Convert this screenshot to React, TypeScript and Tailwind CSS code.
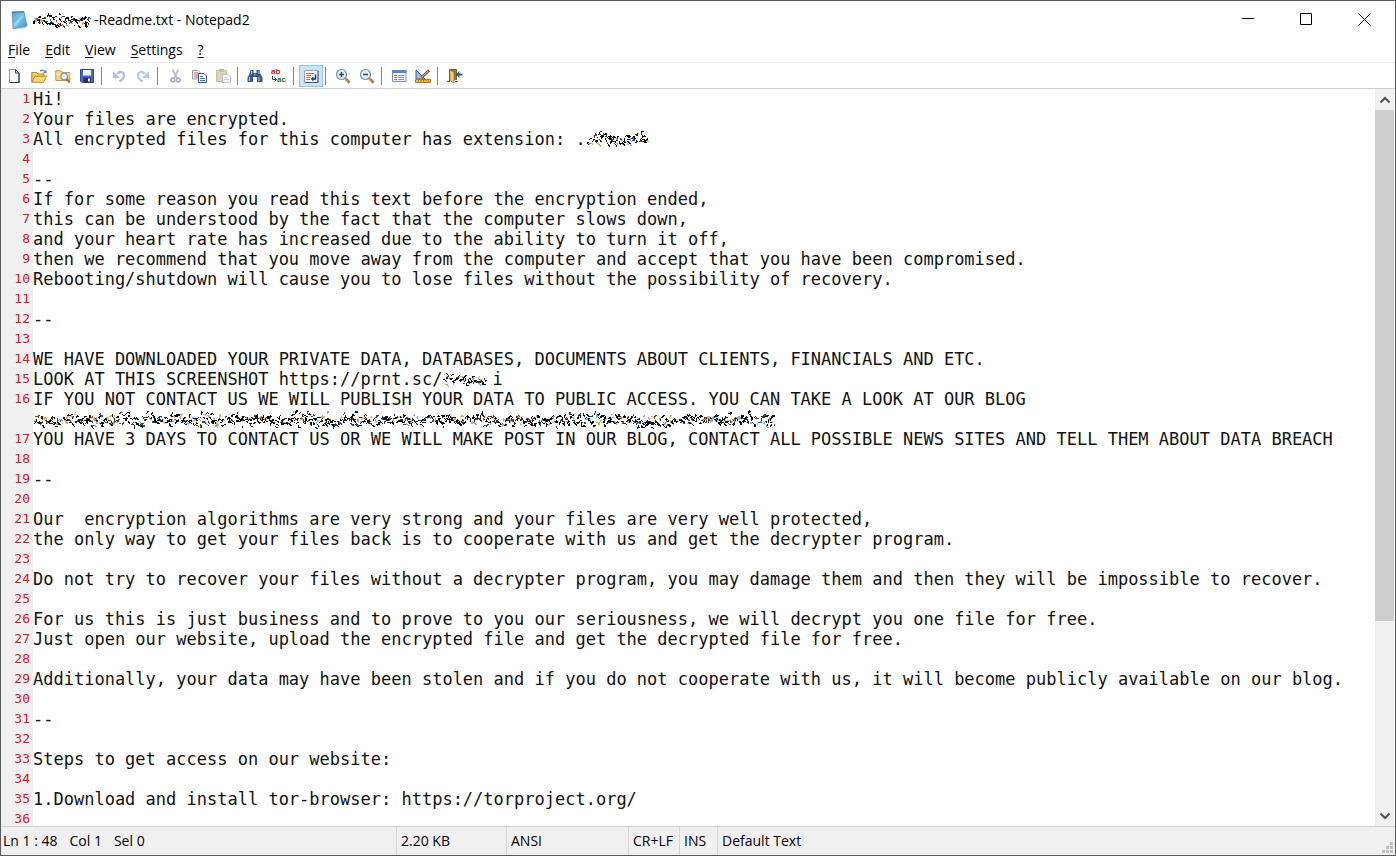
import { Fragment, type ReactNode } from "react";

const UI_FONT = "font-['Open_Sans','Noto_Sans',sans-serif]";
const MONO_FONT = "font-['DejaVu_Sans_Mono','Liberation_Mono',monospace]";

function makeRandom(seed: number) {
  let s = seed;
  return () => {
    s = (s * 1664525 + 1013904223) % 4294967296;
    return s / 4294967296;
  };
}

/* Scrambled pixels that cover a redacted piece of text. */
function Redaction({ width, seed, className }: { width: number; seed: number; className?: string }) {
  const rand = makeRandom(seed);
  const inks = ["#08090c", "#0d111c", "#1d140e", "#111318", "#234a74", "#7a3c12", "#d8a860", "#7fb0dc"];
  const strokes: { d: string; ink: string; w: number }[] = [];
  let ceiling = 6;
  let floor = 17;
  for (let x = 1; x < width - 5; x += 0.7) {
    if (rand() < 0.16) {
      ceiling = rand() < 0.35 ? 2 : 6;
      floor = rand() < 0.25 ? 19 : 16;
    }
    if (rand() < 0.12) continue;
    const y = ceiling + 2 + rand() * (floor - ceiling - 3);
    const dx = rand() * 2.5;
    const dy = rand() < 0.65 ? -rand() * 3 : rand() * 3;
    strokes.push({
      d: `M${x.toFixed(1)} ${y.toFixed(1)}l${dx.toFixed(1)} ${dy.toFixed(1)}l${(rand() * 2).toFixed(1)} ${(rand() * 1.5).toFixed(1)}`,
      ink: inks[Math.floor(Math.pow(rand(), 1.5) * inks.length)],
      w: rand() < 0.25 ? 1.6 : 1,
    });
  }
  return (
    <svg
      role="img"
      aria-label="Redacted"
      className={`inline-block h-5 shrink-0 align-top ${className ?? ""}`}
      width={width}
      height={20}
      viewBox={`0 0 ${width} 20`}
      fill="none"
      shapeRendering="crispEdges"
    >
      {strokes.map((s, i) => (
        <path key={i} d={s.d} stroke={s.ink} strokeWidth={s.w} />
      ))}
    </svg>
  );
}

function Icon({ children }: { children: ReactNode }) {
  return (
    <svg className="size-4" viewBox="0 0 16 16" fill="none" aria-hidden="true">
      {children}
    </svg>
  );
}

const icons: Record<string, ReactNode> = {
  New: (
    <>
      <path d="M2.500 1.500h6l3.500 3.500v9.500h-9.500z" fill="#fdfeff" stroke="#8b94a8" />
      <path d="M12 5v9.500H3" stroke="#25365a" strokeWidth="1.200" />
      <path d="M8.500 1.500V5H12z" fill="#dde5f2" stroke="#35456b" />
    </>
  ),
  Open: (
    <>
      <path d="M.8 14V4.500h4.700L7 6h6v2.500" fill="#f2cf63" stroke="#b3852a" />
      <path d="M.8 14.300 4 8.200h11.500l-3 6.100z" fill="#fbd873" stroke="#bd8b26" />
      <path d="M9 3.200c2-1.600 4-1.200 5.300.6" stroke="#5c7ea8" strokeWidth="1.200" />
      <path d="M15.500 1.500v3.800h-3.600z" fill="#5c7ea8" />
    </>
  ),
  Browse: (
    <>
      <path d="M.8 12.500V2.800h5L7.300 4.500h7.500v8z" fill="#f7d674" stroke="#c19a40" />
      <path d="M1.500 6.200h13" stroke="#fff0b8" />
      <circle cx="9.200" cy="8.500" r="3.300" fill="#dcebf8" stroke="#8796a8" strokeWidth="1.200" />
      <path d="m11.700 11 3 3.500" stroke="#a9691e" strokeWidth="2.200" />
    </>
  ),
  Save: (
    <>
      <path d="M1.500 1.500h13v13H3l-1.500-1.500z" fill="#4f62d4" stroke="#3442a0" />
      <path d="M4 2h8v5.500H4z" fill="#eef3fc" />
      <path d="M4.500 9.500h7.500v5H4.500z" fill="#232b59" />
      <path d="M9 10.500h2v3H9z" fill="#f1f4fb" />
    </>
  ),
  Undo: (
    <>
      <path d="M6 6C8.500 3 13 3.500 13 7.500c0 3-2 4.500-4.500 6" stroke="#b5bfdd" strokeWidth="2.400" />
      <path d="M2 3v7h7z" fill="#b5bfdd" />
    </>
  ),
  Redo: (
    <>
      <path d="M10 6C7.500 3 3 3.500 3 7.500c0 3 2 4.500 4.500 6" stroke="#b9c9df" strokeWidth="2.400" />
      <path d="M14 3v7H7z" fill="#b9c9df" />
    </>
  ),
  Cut: (
    <>
      <path d="M5.500 1.500 10 10M11.500 1.500 7 10" stroke="#bcbfc9" strokeWidth="1.800" />
      <circle cx="5.800" cy="12" r="1.900" stroke="#b0a8cb" strokeWidth="1.600" />
      <circle cx="11.200" cy="12" r="1.900" stroke="#b0a8cb" strokeWidth="1.600" />
    </>
  ),
  Copy: (
    <>
      <path d="M1.500 2.500h5.500l2 2v6.500H1.500z" fill="#fff" stroke="#8d96b5" />
      <path d="M3 5h4M3 7h4M3 9h4" stroke="#c0564c" />
      <path d="M7.500 5.500h5.500l2.500 2.500v6.500h-8z" fill="#f3f7ff" stroke="#31569a" />
      <path d="M9 8.500h3M9 10.500h5M9 12.500h5" stroke="#4a73bf" />
    </>
  ),
  Paste: (
    <>
      <path d="M1.500 2.500h10v11h-10z" fill="#d9d3bb" stroke="#c5bea5" />
      <path d="M4 1h5v3H4z" fill="#bdbcb8" />
      <path d="M7.500 6.500H13l2.500 2.500v5.500h-8z" fill="#f5f5f6" stroke="#bfc2cb" />
      <path d="M9 9.500h3M9 11.500h5" stroke="#c7cad3" />
    </>
  ),
  Find: (
    <>
      <path d="M3.500 2h3v3h3V2h3l.5 3 2.500 4.500v4.500H10V9H6v5H.500V9.500L3 5z" fill="#34588f" />
      <path d="M4.500 3v3M2.500 9v4M12 3v3M12 9v4" stroke="#bdd4f2" />
      <path d="M7 6.500h2" stroke="#8fb0dd" />
    </>
  ),
  Replace: (
    <>
      <text x="0" y="6" fontSize="8" fontWeight="700" fill="#b02a32" fontFamily="Liberation Sans, sans-serif">
        ab
      </text>
      <text x="6" y="14" fontSize="8" fontWeight="700" fill="#237a2c" fontFamily="Liberation Sans, sans-serif">
        ac
      </text>
      <path d="M1.500 8v3.500H5M3.500 9.500l2 2-2 2" stroke="#2f4c86" />
    </>
  ),
  "Word Wrap": (
    <>
      <path d="M1.500 2.500h13.500v12H1.500z" fill="#fafcff" stroke="#8ea3cf" />
      <path d="M15 3v11.500H2" stroke="#3c5797" />
      <path d="M3 5.500h8" stroke="#d2603c" />
      <path d="M3 7.500h5M3 9.500h4M3 11.500h4" stroke="#cf7a56" />
      <path d="M12.500 6.500v4.500H9" stroke="#1c2f78" strokeWidth="1.500" />
      <path d="M10.500 8.500v5L7.800 11z" fill="#1c2f78" />
    </>
  ),
  "Zoom In": (
    <>
      <circle cx="6.500" cy="6.500" r="5" fill="#e3eef9" stroke="#8193a8" strokeWidth="1.200" />
      <path d="M4 6.500h5M6.500 4v5" stroke="#3a4a72" strokeWidth="1.600" />
      <path d="m10.500 10.500 4.200 4.200" stroke="#ae8448" strokeWidth="2.800" />
    </>
  ),
  "Zoom Out": (
    <>
      <circle cx="6.500" cy="6.500" r="5" fill="#e3eef9" stroke="#8193a8" strokeWidth="1.200" />
      <path d="M4 6.500h5" stroke="#3a4a72" strokeWidth="1.600" />
      <path d="m10.500 10.500 4.200 4.200" stroke="#ae8448" strokeWidth="2.800" />
    </>
  ),
  Scheme: (
    <>
      <path d="M1.500 2.500h13.500v11H1.500z" fill="#f5f9ff" stroke="#6f8fcd" />
      <path d="M1 2h14.500v3H1z" fill="#5b83d5" />
      <path d="M3 7.500h3M3 9.500h3M3 11.500h3" stroke="#c76a50" />
      <path d="M7 7.500h6M7 9.500h6M7 11.500h6" stroke="#7f95c1" />
    </>
  ),
  "Customize Schemes": (
    <>
      <path d="M1 2v9h9z" fill="#9dbbe8" stroke="#3a64ab" />
      <path d="M.500 11.500h15v3H.500z" fill="#f1bf45" stroke="#b17a20" />
      <path d="M3.500 12v1.500M6 12v1.500M8.500 12v1.500M11 12v1.500M13.500 12v1.500" stroke="#80591a" strokeWidth=".7" />
      <path d="m6.500 9.500 7.500-7" stroke="#7e5a3d" strokeWidth="2.800" />
      <path d="m7 9 6-5.600" stroke="#d5b28a" />
    </>
  ),
  Exit: (
    <>
      <path d="M2.500 13V1.500h7V12" fill="#8d7b43" stroke="#6e6238" />
      <path d="m3 2 4 2.500V15l-4-2.500z" fill="#f4cf62" stroke="#92752b" strokeWidth=".8" />
      <path d="M0 13.500h3M8 13.500h3" stroke="#555" />
      <path d="M15.500 6.500H11" stroke="#315f9e" strokeWidth="2" />
      <path d="M12.500 3v7L8.500 6.500z" fill="#315f9e" />
    </>
  ),
};

const toolGroups: string[][] = [
  ["New", "Open", "Browse", "Save"],
  ["Undo", "Redo"],
  ["Cut", "Copy", "Paste"],
  ["Find", "Replace"],
  ["Word Wrap"],
  ["Zoom In", "Zoom Out"],
  ["Scheme", "Customize Schemes"],
  ["Exit"],
];

function TitleBar() {
  const button = "flex h-full w-[58px] items-center justify-center hover:bg-gray-200";
  return (
    <header className="flex h-[37px] shrink-0 items-center pr-0.5 pl-2">
      <svg className="size-5 shrink-0" viewBox="0 0 20 20" aria-hidden="true">
        <defs>
          <linearGradient id="pad" x1="0" y1="0" x2="1" y2="1">
            <stop offset="0" stopColor="#5b9fbd" />
            <stop offset=".5" stopColor="#79c6e8" />
            <stop offset="1" stopColor="#3f93c6" />
          </linearGradient>
        </defs>
        <path d="m15 3 4 12-3 3.500L4 19z" fill="#b5c5d2" />
        <path d="m3 2 12-.5 2.500 14.500L4 18.500z" fill="url(#pad)" stroke="#4d91b3" strokeWidth=".7" />
        <path d="m3.500 2.300 11-.5" stroke="#3d5968" strokeDasharray="1 1" strokeWidth="1.500" />
        <path d="m4.500 14 8-8 2 .5-8 10z" fill="#a9def2" opacity=".6" />
      </svg>
      <h1 className="flex items-center text-[14px] leading-5 text-black">
        <Redaction width={61} seed={11} className="ml-1" />
        <span className="whitespace-pre">-Readme.txt - Notepad2</span>
      </h1>
      <div className="ml-auto flex h-full">
        <button type="button" aria-label="Minimize" className={button}>
          <svg className="size-[13px]" viewBox="0 0 13 13" stroke="#000">
            <path d="M0 5.500h12" />
          </svg>
        </button>
        <button type="button" aria-label="Maximize" className={button}>
          <svg className="size-[13px]" viewBox="0 0 13 13" stroke="#000" fill="none">
            <path d="M.5 .5h11v11H.5z" />
          </svg>
        </button>
        <button type="button" aria-label="Close" className={button}>
          <svg className="size-[13px]" viewBox="0 0 13 13" stroke="#000">
            <path d="m.5.5 12 12M12.500.5l-12 12" />
          </svg>
        </button>
      </div>
    </header>
  );
}

function MenuBar() {
  return (
    <nav className="flex h-6 shrink-0 items-end gap-[15px] px-[7px] text-[14px] leading-6 text-black">
      {["File", "Edit", "View", "Settings", "?"].map((m) => (
        <button key={m} type="button">
          <span className="underline underline-offset-2">{m[0]}</span>
          {m.slice(1)}
        </button>
      ))}
    </nav>
  );
}

function Toolbar() {
  return (
    <div role="toolbar" className="flex h-[27px] shrink-0 items-center border-t border-b border-t-[#e9e9e9] border-b-[#cfcfcf] px-0.5">
      {toolGroups.map((group, i) => (
        <Fragment key={i}>
          {i > 0 && (
            <span className="w-2 pl-0.5">
              <span className="block h-[18px] w-px bg-[#858585]" />
            </span>
          )}
          {group.map((name) => (
            <button
              key={name}
              type="button"
              aria-label={name}
              className={`flex h-[22px] w-6 items-center justify-center ${
                name === "Word Wrap" ? "border border-[#93c7f0] bg-[#cce4f7]" : "hover:bg-[#e5f1fb]"
              }`}
            >
              <Icon>{icons[name]}</Icon>
            </button>
          ))}
        </Fragment>
      ))}
    </div>
  );
}

const lines: ReactNode[] = [
  "Hi!",
  "Your files are encrypted.",
  <>
    {"All encrypted files for this computer has extension: ."}
    <Redaction width={66} seed={29} />
  </>,
  "",
  "--",
  "If for some reason you read this text before the encryption ended,",
  "this can be understood by the fact that the computer slows down,",
  "and your heart rate has increased due to the ability to turn it off,",
  "then we recommend that you move away from the computer and accept that you have been compromised.",
  "Rebooting/shutdown will cause you to lose files without the possibility of recovery.",
  "",
  "--",
  "",
  "WE HAVE DOWNLOADED YOUR PRIVATE DATA, DATABASES, DOCUMENTS ABOUT CLIENTS, FINANCIALS AND ETC.",
  <>
    {"LOOK AT THIS SCREENSHOT https://prnt.sc/"}
    <Redaction width={50} seed={5} />i
  </>,
  <>
    IF YOU NOT CONTACT US WE WILL PUBLISH YOUR DATA TO PUBLIC ACCESS. YOU CAN TAKE A LOOK AT OUR BLOG
    <br />
    <Redaction width={746} seed={77} />
  </>,
  "YOU HAVE 3 DAYS TO CONTACT US OR WE WILL MAKE POST IN OUR BLOG, CONTACT ALL POSSIBLE NEWS SITES AND TELL THEM ABOUT DATA BREACH",
  "",
  "--",
  "",
  "Our  encryption algorithms are very strong and your files are very well protected,",
  "the only way to get your files back is to cooperate with us and get the decrypter program.",
  "",
  "Do not try to recover your files without a decrypter program, you may damage them and then they will be impossible to recover.",
  "",
  "For us this is just business and to prove to you our seriousness, we will decrypt you one file for free.",
  "Just open our website, upload the encrypted file and get the decrypted file for free.",
  "",
  "Additionally, your data may have been stolen and if you do not cooperate with us, it will become publicly available on our blog.",
  "",
  "--",
  "",
  "Steps to get access on our website:",
  "",
  "1.Download and install tor-browser: https://torproject.org/",
  "",
];

function Editor() {
  return (
    <main className="flex min-h-0 flex-1 pr-px">
      <ol
        role="textbox"
        aria-multiline="true"
        aria-label="Readme.txt"
        className={`min-w-0 flex-1 overflow-hidden bg-white text-[17px] leading-5 text-[#111] ${MONO_FONT}`}
      >
        {lines.map((line, i) => (
          <li key={i} className="flex">
            <span className="w-8 shrink-0 bg-[#f0f0f0] pr-[3px] text-right text-[13px] leading-5 text-[#e0141e]">
              {i + 1}
            </span>
            <span className="min-w-0 flex-1 whitespace-pre">{line}</span>
          </li>
        ))}
      </ol>
      <div className="flex w-[19px] shrink-0 flex-col bg-[#f0f0f0]">
        <button type="button" aria-label="Scroll up" className="flex h-[21px] items-center justify-center">
          <svg className="size-3" viewBox="0 0 12 12" fill="none" stroke="#505050" strokeWidth="2">
            <path d="m1.500 8.500 4.500-4.500 4.500 4.500" />
          </svg>
        </button>
        <div className="flex min-h-0 flex-1 flex-col">
          <div className="h-[73.5%] bg-[#cdcdcd]" />
        </div>
        <button type="button" aria-label="Scroll down" className="flex h-[21px] items-center justify-center">
          <svg className="size-3" viewBox="0 0 12 12" fill="none" stroke="#505050" strokeWidth="2">
            <path d="m1.500 3.500 4.500 4.500 4.500-4.500" />
          </svg>
        </button>
      </div>
    </main>
  );
}

function StatusBar() {
  const cell = "flex shrink-0 items-center border-l border-[#d7d7d7] pl-1";
  return (
    <footer className="flex h-[29px] shrink-0 border-t border-[#d0d0d0] bg-[#f0f0f0] text-[14px] leading-5 text-black">
      <span className="flex w-[395px] shrink-0 items-center gap-3 pl-0.5">
        <span>Ln 1 : 48</span>
        <span>Col 1</span>
        <span>Sel 0</span>
      </span>
      <span className={`w-[110px] ${cell}`}>2.20 KB</span>
      <span className={`w-[122px] ${cell}`}>ANSI</span>
      <span className={`w-[51px] ${cell}`}>CR+LF</span>
      <span className={`w-[38px] ${cell}`}>INS</span>
      <span className={cell}>Default Text</span>
      <svg className="mt-auto mr-px mb-px ml-auto size-3" viewBox="0 0 12 12" fill="#bfbfbf" aria-hidden="true">
        <path d="M8 0h3v3H8zM4 4h3v3H4zM8 4h3v3H8zM0 8h3v3H0zM4 8h3v3H4zM8 8h3v3H8z" />
      </svg>
    </footer>
  );
}

export default function App() {
  return (
    <div className={`flex h-screen flex-col overflow-hidden border border-[#5a5a5a] bg-white ${UI_FONT}`}>
      <TitleBar />
      <MenuBar />
      <Toolbar />
      <Editor />
      <StatusBar />
    </div>
  );
}
